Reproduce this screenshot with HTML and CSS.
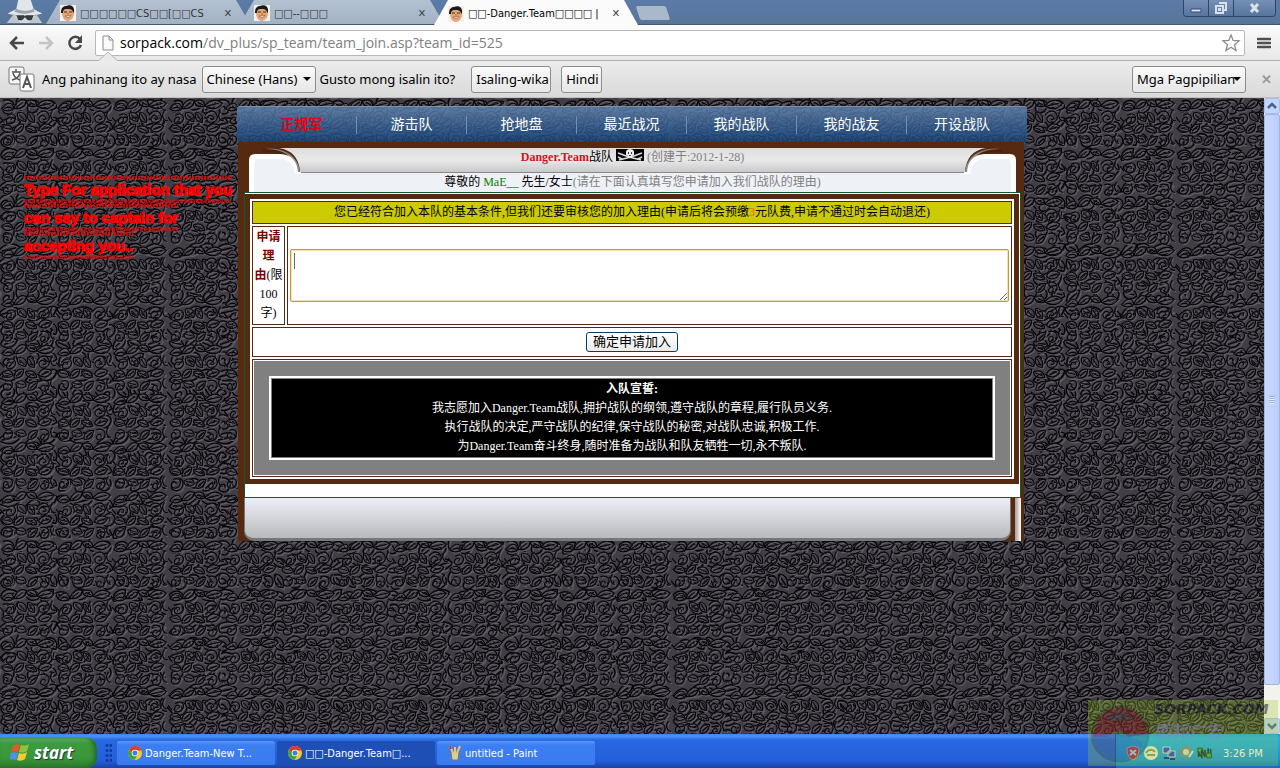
FILE: index.html
```html
<!DOCTYPE html>
<html lang="zh-CN">
<head>
    <meta charset="UTF-8">
    <meta name="viewport" content="width=device-width, initial-scale=1.0">
    <title>申请-Danger.Team</title>
    <link rel="stylesheet" href="styles.css">
</head>
<body>

<!-- Shared shapes -->
<svg class="defs" aria-hidden="true">
    <defs>
        <symbol id="face" viewBox="0 0 16 16">
            <rect width="16" height="16" fill="#f3efe9"/>
            <path d="M2 7c0-3 3-6 7-5 4 0 5 3 5 6 0 4-2 7-6 8-4 0-6-4-6-9z" fill="#e2a679"/>
            <path d="M1 8C1 3 3 1 6 1c4-2 9 0 8 6l-1 1c0-3-2-4-5-4C5 4 3 4 3 8z" fill="#1d1a1a"/>
            <path d="M4 7h3M9 7h3" stroke="#4a2a1c" stroke-width="1"/>
            <path d="M5 11c2 2 5 2 6-1-2 1-4 1-6 1z" fill="#fff" stroke="#8f3c2b" stroke-width=".6"/>
            <path d="M8 8v2" stroke="#b9714a" stroke-width="1.2"/>
        </symbol>
        <symbol id="chrome" viewBox="0 0 16 16">
            <circle cx="8" cy="8" r="7" fill="#f4c92b"/>
            <path d="M2 4.400A7 7 0 0 1 14.600 5.500H8L5 9z" fill="#dd3b2c"/>
            <path d="M2 4.400A7 7 0 0 0 7.500 15L10.500 10 6 9.500z" fill="#3ba24a"/>
            <circle cx="8" cy="8" r="3.300" fill="#fff"/>
            <circle cx="8" cy="8" r="2.500" fill="#3f7fd6"/>
        </symbol>
        <symbol id="ear" viewBox="0 0 52 44">
            <path d="M0 0H30C43 2 50 10 51 24H0z" fill="#552a10"/>
            <path d="M16 1C32-1 50 6 51 25H45C44 12 34 4 16 1z" fill="#8d8a87"/>
            <path d="M14 3C32 1 45 9 47 25" fill="none" stroke="#4a230c" stroke-width="3"/>
            <path d="M0 44V12Q0 6 6 6H32C44 7 48 14 49 24H52V44z" fill="#fff"/>
            <path d="M5 44V16Q5 11 10 11H32C41 12 45 17 46 26H52V44z" fill="#eef2f7"/>
        </symbol>
    </defs>
</svg>

<header class="browser">
    <div class="tab-strip">
        <svg class="spy" viewBox="0 0 44 25">
            <path d="M5 14C12 10 14 10 14 9L16 0H29L32 9C34 11 38 12 41 14 32 17 14 17 5 14z" fill="#e3e6e9"/>
            <path d="M14 9C20 12 27 12 32 9L33 12C26 15 18 15 12 12z" fill="#9aa2aa"/>
            <path d="M11 16H34L33 24H12z" fill="#d6dade"/>
            <path d="M14 16h8l1 1 1-1h8l-2 5h-4l-3-3-3 3h-4z" fill="#333b43"/>
            <path d="M4 24L11 15 18 24zM27 24L35 15 41 24z" fill="#bfc5cb"/>
        </svg>
        <a class="tab" href="#"><svg class="icon16"><use href="#face"/></svg><span class="tab-title">□□□□□□CS□□[□□CS</span><span class="x">✕</span></a>
        <a class="tab" href="#"><svg class="icon16"><use href="#face"/></svg><span class="tab-title">□□--□□□</span><span class="x">✕</span></a>
        <a class="tab active" href="#"><svg class="icon16"><use href="#face"/></svg><span class="tab-title">□□-Danger.Team□□□□ |</span><span class="x">✕</span></a>
        <button class="new-tab" aria-label="New tab"></button>
        <div class="window-buttons">
            <button aria-label="Minimize"><svg viewBox="0 0 24 16"><path d="M7 9h10v3H7z" fill="#d8e2ee" stroke="#334a6a"/></svg></button>
            <button aria-label="Restore"><svg viewBox="0 0 24 16"><path d="M10 3h7v7h-2M7 6h7v7H7zM10 9h1v1h-1z" fill="none" stroke="#d8e2ee" stroke-width="2"/></svg></button>
            <button class="wide" aria-label="Close"><svg viewBox="0 0 24 16"><path d="M8 4l7 8M15 4l-7 8" stroke="#d8e2ee" stroke-width="3"/></svg></button>
        </div>
    </div>

    <div class="toolbar">
        <button class="tool" aria-label="Back"><svg viewBox="0 0 18 18"><path d="M16 9H3M9 3L3 9l6 6" fill="none" stroke="#484848" stroke-width="2.500"/></svg></button>
        <button class="tool" aria-label="Forward"><svg viewBox="0 0 18 18"><path d="M2 9h13M9 3l6 6-6 6" fill="none" stroke="#c4c4c4" stroke-width="2.500"/></svg></button>
        <button class="tool" aria-label="Reload"><svg viewBox="0 0 18 18"><path d="M14 5A6 6 0 1 0 15 11" fill="none" stroke="#484848" stroke-width="2.500"/><path d="M16 1v8H9z" fill="#484848"/></svg></button>
        <div class="address">
            <svg class="page-icon" viewBox="0 0 12 16"><path d="M1 1h6l4 4v10H1zM7 1v4h4" fill="#fafafa" stroke="#8c8c8c"/></svg>
            <a class="url" href="#"><b>sorpack.com</b>/dv_plus/sp_team/team_join.asp?team_id=525</a>
            <svg class="star" viewBox="0 0 20 20"><path d="M10 2l2.200 5.500 5.800.4-4.500 3.800 1.500 5.800-5-3.200-5 3.200 1.500-5.800L2 7.900l5.800-.4z" fill="#fff" stroke="#8b8b8b" stroke-width="1.300"/></svg>
        </div>
        <button class="menu" aria-label="Menu"><svg viewBox="0 0 14 14"><path d="M1 3h12M1 7h12M1 11h12" stroke="#505050" stroke-width="2.600" stroke-linecap="round"/></svg></button>
    </div>

    <div class="infobar">
        <svg class="notch" viewBox="0 0 20 10"><path d="M0 10L10 1l10 9" fill="#e9e9e9" stroke="#b5b5b5"/></svg>
        <svg class="translate" viewBox="0 0 28 27">
            <rect x="1" y="1" width="15" height="17" rx="2" fill="#f6f6f6" stroke="#777"/>
            <path d="M4 6h9M8 3v3M5 7c1 4 4 6 7 7M12 7c-1 4-4 6-8 7" fill="none" stroke="#555" stroke-width="1.400"/>
            <rect x="12" y="8" width="14" height="17" rx="2" fill="#fff" stroke="#777"/>
            <path d="M15 22l4-11 4 11M16 18h6" fill="none" stroke="#555" stroke-width="2"/>
        </svg>
        <label for="lang">Ang pahinang ito ay nasa</label>
        <select id="lang" class="bar-button lang"><option>Chinese (Hans)</option></select>
        <span>Gusto mong isalin ito?</span>
        <button class="bar-button first">Isaling-wika</button>
        <button class="bar-button second">Hindi</button>
        <select class="bar-button options" aria-label="Mga Pagpipilian"><option>Mga Pagpipilian</option></select>
        <button class="bar-close" aria-label="Close">✕</button>
    </div>
</header>

<div class="viewport">
    <div class="page">
        <aside class="note"><span>Type For application that you<br>can say to captain for<br>accepting you..</span></aside>

        <main class="team">
            <nav class="menu-bar">
                <a class="current" href="#">正规军</a>
                <a href="#">游击队</a>
                <a href="#">抢地盘</a>
                <a href="#">最近战况</a>
                <a href="#">我的战队</a>
                <a href="#">我的战友</a>
                <a href="#">开设战队</a>
            </nav>
            <div class="frame">
                <div class="heading">
                    <svg class="ear"><use href="#ear"/></svg>
                    <div class="heading-text">
                        <p class="team-name"><b>Danger.Team</b>战队
                            <svg class="pirate" viewBox="0 0 28 12">
                                <rect width="28" height="12" fill="#050505"/>
                                <path d="M2 4l11 4 12 3M26 4L15 8 3 11M2 8l4 2M26 8l-4 2" fill="none" stroke="#ddd" stroke-width="1.400"/>
                                <path d="M10 3c0-4 8-4 8 0v3l-2 1v2h-4V7l-2-1z" fill="#eee"/>
                                <path d="M12 4h1M15 4h1M14 6v1" stroke="#000" stroke-width="1.400"/>
                            </svg>
                            <span>(创建于:2012-1-28)</span></p>
                        <p class="greeting">尊敬的 <em>MaE__</em> 先生/女士<span>(请在下面认真填写您申请加入我们战队的理由)</span></p>
                    </div>
                    <svg class="ear flip"><use href="#ear"/></svg>
                </div>

                <form class="sheet">
                    <table class="join">
                        <tr><td class="notice" colspan="2">您已经符合加入本队的基本条件,但我们还要审核您的加入理由(申请后将会预缴<span>3</span>元队费,申请不通过时会自动退还)</td></tr>
                        <tr>
                            <th class="reason"><label for="reason"><b>申请<br>理<br>由</b>(限<br>100<br>字)</label></th>
                            <td class="field"><textarea id="reason"></textarea></td>
                        </tr>
                        <tr><td class="action" colspan="2"><button type="button" class="submit">确定申请加入</button></td></tr>
                        <tr>
                            <td class="pledge" colspan="2">
                                <div class="pledge-area">
                                    <div class="oath">
                                        <b>入队宣誓:</b><br>
                                        我志愿加入Danger.Team战队,拥护战队的纲领,遵守战队的章程,履行队员义务.<br>
                                        执行战队的决定,严守战队的纪律,保守战队的秘密,对战队忠诚,积极工作.<br>
                                        为Danger.Team奋斗终身,随时准备为战队和队友牺牲一切,永不叛队.
                                    </div>
                                </div>
                            </td>
                        </tr>
                    </table>
                </form>
                <div class="base"><div class="base-plate"></div><div class="base-edge"></div></div>
            </div>
        </main>
    </div>

    <div class="scrollbar">
        <button aria-label="Scroll up"><svg viewBox="0 0 14 14"><path d="M3 9l4-4 4 4" fill="none" stroke="#4d6185" stroke-width="2.500"/></svg></button>
        <div class="thumb"></div>
        <button aria-label="Scroll down"><svg viewBox="0 0 14 14"><path d="M3 5l4 4 4-4" fill="none" stroke="#4d6185" stroke-width="2.500"/></svg></button>
    </div>
</div>

<footer class="taskbar">
    <button class="start">
        <svg viewBox="0 0 20 20">
            <path d="M3 4c2-2 4-2 7-1L8 10C5 9 3 9 1 10z" fill="#e8562c"/>
            <path d="M11 3c3 1 5 1 8-1l-2 7c-3 2-5 2-8 1z" fill="#8cc63e"/>
            <path d="M1 11c2-1 4-1 7 0l-2 7c-3-1-5-1-7 0z" fill="#4f8ff0"/>
            <path d="M9 11c3 1 5 1 8-1l-2 7c-3 2-5 2-8 1z" fill="#fbc92d"/>
        </svg>
        <span>start</span>
    </button>
    <div class="grip"></div>
    <button class="task"><svg class="icon16"><use href="#chrome"/></svg>Danger.Team-New T...</button>
    <button class="task pressed"><svg class="icon16"><use href="#chrome"/></svg>□□-Danger.Team□...</button>
    <button class="task">
        <svg class="icon16" viewBox="0 0 16 16"><path d="M4 7h8l-1 8H5z" fill="#d8cfa0" stroke="#80764d"/><path d="M6 8L3 1M8 8V2M10 8l3-7" stroke="#f0c36c" stroke-width="2"/><path d="M3 1l1 3" stroke="#c33" stroke-width="2"/></svg>
        untitled - Paint
    </button>
    <div class="tray">
        <svg viewBox="0 0 16 16"><path d="M8 1l6 2c0 6-1 9-6 12C3 12 2 9 2 3z" fill="#d8262c" stroke="#f0b0a8"/><path d="M5 5l6 5M11 5l-6 5" stroke="#fff" stroke-width="2"/></svg>
        <svg viewBox="0 0 16 16"><circle cx="8" cy="8" r="7" fill="#eceadb"/><path d="M3 8c2-4 7-4 9-1M4 10h8" fill="none" stroke="#8a8871" stroke-width="2"/></svg>
        <svg viewBox="0 0 16 16"><path d="M2 2h7v6H2zM7 6h7v6H7z" fill="#2336c8" stroke="#cfd8f5"/><path d="M3 13h5M9 14h5" stroke="#111a70" stroke-width="2"/></svg>
        <svg viewBox="0 0 16 16"><circle cx="7" cy="7" r="6" fill="#7c8288"/><circle cx="7" cy="7" r="3" fill="#d6d9dc"/><path d="M10 12l4-6" stroke="#c9ecf5" stroke-width="2"/></svg>
        <svg viewBox="0 0 20 16"><path d="M1 2h6v5H1zM12 8h6v6h-6z" fill="#35a04d" stroke="#122"/><path d="M2 13V8l4 5V4l4 9V4M14 2v6M17 3v5" fill="none" stroke="#10251c" stroke-width="2"/></svg>
        <time>3:26 PM</time>
    </div>
</footer>

<svg class="watermark" viewBox="0 0 190 66" aria-hidden="true">
    <rect width="190" height="66" fill="#9dcc28" opacity=".5"/>
    <ellipse cx="32" cy="34" rx="28" ry="27" fill="#3a3544" opacity=".35" stroke="#222" stroke-width="3"/>
    <path d="M8 24C18 4 46 2 56 22l4 12-20 3-9-8-12 8H5z" fill="#8c2028" opacity=".75"/>
    <path d="M18 20c8-10 22-10 30 0l-8-2-8 4-6-3z" fill="#47474c" opacity=".8"/>
    <path d="M5 38c12-6 30-6 50 4-6 22-38 26-50-4z" fill="#3763a6" opacity=".5"/>
    <text x="66" y="14" class="mark-name">SORPACK.COM</text>
    <text x="68" y="38" class="mark-cn">索邦广告</text>
</svg>

</body>
</html>
```
FILE: styles.css
```css
* {
    box-sizing: border-box;
}

body {
    margin: 0;
    height: 100vh;
    display: flex;
    flex-direction: column;
    overflow: hidden;
    font-family: "Noto Sans", "Open Sans", "Noto Sans CJK SC", sans-serif;
    font-size: 13px;
    color: #000;
}

button,
select,
textarea {
    font-family: inherit;
    font-size: inherit;
    margin: 0;
}

a {
    color: inherit;
    text-decoration: none;
}

p {
    margin: 0;
}

.defs {
    position: absolute;
    width: 0;
    height: 0;
}

.icon16 {
    width: 16px;
    height: 16px;
    flex: none;
}

/* Tabs */
.tab-strip {
    display: flex;
    height: 25px;
    padding-left: 2px;
    background: linear-gradient(#5b7ca8, #587499);
    border-bottom: 1px solid #3f5674;
}

.spy {
    width: 44px;
    height: 24px;
    flex: none;
}

.tab {
    display: flex;
    align-items: center;
    gap: 4px;
    width: 204px;
    height: 24px;
    margin-right: -10px;
    padding: 2px 18px 0 14px;
    background: linear-gradient(#b3c1d1, #a2b2c5);
    clip-path: polygon(14px 0, 190px 0, 204px 100%, 0 100%);
    font-family: "DejaVu Sans Condensed", "DejaVu Sans", sans-serif;
    font-size: 11px;
    color: #333;
}

.tab.active {
    z-index: 1;
    height: 25px;
    background: #fbfbfb;
    color: #000;
}

.tab-title {
    flex: 1;
    min-width: 0;
    overflow: hidden;
    white-space: nowrap;
}

.x {
    font-size: 11px;
    font-weight: bold;
    color: #444;
}

.new-tab {
    width: 30px;
    height: 14px;
    margin: 6px 0 0 10px;
    padding: 0;
    border: 0;
    border-radius: 2px;
    background: #a9b9cb;
    transform: skewX(18deg);
}

.window-buttons {
    display: flex;
    height: 17px;
    margin-left: auto;
    margin-right: 4px;
    border: 1px solid #2e4468;
    border-top: 0;
    border-radius: 0 0 4px 4px;
    overflow: hidden;
}

.window-buttons button {
    width: 25px;
    padding: 0;
    border: 0;
    border-right: 1px solid #2e4468;
    background: linear-gradient(#7690b5, #56759d);
}

.window-buttons .wide {
    width: 41px;
    border-right: 0;
}

.window-buttons svg {
    display: block;
    width: 24px;
    height: 16px;
    margin: auto;
}

/* Address row */
.toolbar {
    display: flex;
    align-items: center;
    height: 36px;
    padding: 0 8px;
    background: linear-gradient(#fbfbfb, #e8e8e8);
    border-bottom: 1px solid #b0b0b0;
}

.tool {
    width: 29px;
    height: 24px;
    padding: 0;
    border: 0;
    background: none;
    text-align: left;
}

.tool svg {
    display: block;
    width: 18px;
    height: 18px;
}

.address {
    flex: 1;
    display: flex;
    align-items: center;
    gap: 6px;
    height: 26px;
    padding: 0 3px 0 6px;
    background: #fff;
    border: 1px solid #b8b8b8;
    border-radius: 2px;
}

.page-icon {
    width: 12px;
    height: 16px;
}

.url {
    flex: 1;
    color: #808080;
    font-family: "Open Sans", "Noto Sans", sans-serif;
    font-size: 14px;
}

.url b {
    font-weight: normal;
    color: #000;
}

.star {
    width: 20px;
    height: 20px;
}

.menu {
    width: 27px;
    height: 24px;
    padding: 0 0 0 12px;
    border: 0;
    background: none;
}

.menu svg {
    display: block;
    width: 14px;
    height: 14px;
}

/* Translate bar */
.infobar {
    position: relative;
    display: flex;
    align-items: center;
    height: 37px;
    padding: 0 7px 0 8px;
    background: linear-gradient(#ececec, #d9d9d9);
    border-bottom: 1px solid #c0c0c0;
    white-space: nowrap;
}

.notch {
    position: absolute;
    left: 98px;
    top: -10px;
    width: 20px;
    height: 10px;
}

.translate {
    width: 28px;
    height: 27px;
    margin-right: 6px;
}

.bar-button {
    height: 27px;
    padding: 0 4px;
    border: 1px solid #8c8c8c;
    border-radius: 3px;
    background: linear-gradient(#fafafa, #e6e6e6);
    color: #000;
}

select.bar-button {
    appearance: none;
    padding: 0 10px 0 4px;
    background: url("data:image/svg+xml,%3Csvg xmlns='http://www.w3.org/2000/svg' width='8' height='4'%3E%3Cpath d='M0 0h8L4 4z'/%3E%3C/svg%3E") right 4px center no-repeat, linear-gradient(#fafafa, #e6e6e6);
}

.lang {
    width: 114px;
    margin: 0 4px 0 5px;
}

.first {
    width: 80px;
    margin-left: 16px;
}

.second {
    width: 41px;
    margin-left: 10px;
}

.options {
    width: 114px;
    margin-left: auto;
}

.bar-close {
    width: 27px;
    padding: 0 0 0 13px;
    border: 0;
    background: none;
    font-weight: bold;
    color: #999;
}

/* Page area */
.viewport {
    flex: 1;
    min-height: 0;
    display: flex;
}

/* Two copies of one leaf tile at different sizes, so the repeat is hard to see */
.page {
    --leaves: url("data:image/svg+xml,%3Csvg xmlns='http://www.w3.org/2000/svg' viewBox='0 0 64 56' width='64' height='56'%3E%3Cg fill='none'%3E%3Cpath id='a' d='M2 12c6-8 12-8 14 0-6 4-10 4-14 0zM5 12c4-2 6-2 9 0M16 12c2-8 8-12 14-9-1 7-6 10-14 9M18 11l8-6M30 4c6-4 12-1 12 5-5 2-10 1-12-5M34 5l6 3M42 9c6-8 14-8 20-3-5 7-12 8-20 3M45 9l13-3M8 20c8-5 12 2 8 7s-11 2-8-3 7 0 4 1M20 17c8-2 12 4 9 10-7-1-10-4-9-10M22 19l6 6M32 16c-2 7 1 12 7 12 2-7-1-11-7-12M33 18l5 8M42 20c5-7 12-6 14 0s-6 11-10 7 1-9 5-6-1 4-2 3M2 34c6-5 11-3 13 3-5 4-11 3-13-3M4 34l9 2M16 40c0-8 5-11 11-10 0 7-4 11-11 10M18 38l7-6M29 33c7-3 12 0 13 6-7 2-12 0-13-6M31 34l9 4M44 36c2-7 9-8 15-4-3 7-10 9-15 4M47 36l9-3M6 44c7-3 10 2 7 7s-10 3-9-2 6-2 5 0M18 46c5-5 11-3 12 3-5 4-11 3-12-3M20 46l8 2M32 54c-1-7 4-11 11-10-1 7-5 11-11 10M34 52l7-6M46 43c8-2 12 3 9 9s-11 2-8-2 6 0 4 1M60 14c-4 6-2 12 4 12M0 22l5 6M60 40c-4 5-2 11 3 12' stroke='%235f5b64' stroke-width='1.2' transform='translate(1.500 1.500)'/%3E%3Cuse href='%23a' transform='translate(-1.500 -1.500)'/%3E%3Cpath d='M2 12c6-8 12-8 14 0-6 4-10 4-14 0zM5 12c4-2 6-2 9 0M16 12c2-8 8-12 14-9-1 7-6 10-14 9M18 11l8-6M30 4c6-4 12-1 12 5-5 2-10 1-12-5M34 5l6 3M42 9c6-8 14-8 20-3-5 7-12 8-20 3M45 9l13-3M8 20c8-5 12 2 8 7s-11 2-8-3 7 0 4 1M20 17c8-2 12 4 9 10-7-1-10-4-9-10M22 19l6 6M32 16c-2 7 1 12 7 12 2-7-1-11-7-12M33 18l5 8M42 20c5-7 12-6 14 0s-6 11-10 7 1-9 5-6-1 4-2 3M2 34c6-5 11-3 13 3-5 4-11 3-13-3M4 34l9 2M16 40c0-8 5-11 11-10 0 7-4 11-11 10M18 38l7-6M29 33c7-3 12 0 13 6-7 2-12 0-13-6M31 34l9 4M44 36c2-7 9-8 15-4-3 7-10 9-15 4M47 36l9-3M6 44c7-3 10 2 7 7s-10 3-9-2 6-2 5 0M18 46c5-5 11-3 12 3-5 4-11 3-12-3M20 46l8 2M32 54c-1-7 4-11 11-10-1 7-5 11-11 10M34 52l7-6M46 43c8-2 12 3 9 9s-11 2-8-2 6 0 4 1M60 14c-4 6-2 12 4 12M0 22l5 6M60 40c-4 5-2 11 3 12' stroke='%23060508' stroke-width='1.4'/%3E%3C/g%3E%3C/svg%3E");
    flex: 1;
    display: grid;
    grid-template-columns: 1fr minmax(0, 790px) 1fr;
    align-items: start;
    padding-top: 8px;
    background: var(--leaves) 0 0 / 56px 49px, var(--leaves) 23px 17px / 72px 63px, #413e47;
}

.note {
    margin: 70px -24px 0 24px;
    font: bold 15px/28px "Liberation Sans", sans-serif;
    white-space: nowrap;
    color: #f00;
    -webkit-text-stroke: 1px #f00;
}

.note span {
    background: repeating-linear-gradient(90deg, rgba(255, 0, 0, .7) 0 2px, transparent 2px 3px) 0 0 / 100% 4px no-repeat,
        repeating-linear-gradient(90deg, rgba(255, 0, 0, .6) 0 3px, transparent 3px 4px) 0 100% / 100% 4px no-repeat;
    padding: 5px 0;
    -webkit-box-decoration-break: clone;
    box-decoration-break: clone;
}

.team {
    grid-column: 2;
    font-family: "Liberation Serif", "Noto Sans CJK SC", serif;
    font-size: 12px;
    line-height: 19px;
}

.menu-bar {
    display: grid;
    grid-template-columns: repeat(7, 110px);
    align-items: center;
    height: 36px;
    padding-left: 10px;
    background: linear-gradient(rgba(100, 135, 180, .8), rgba(20, 72, 130, .8));
    border-top: 1px solid #7890a8;
    border-radius: 3px 3px 0 0;
    font-size: 14px;
    color: #fff;
    text-align: center;
}

.menu-bar a {
    line-height: 18px;
    border-right: 1px solid #6d91b6;
}

.menu-bar a:last-child {
    border-right: 0;
}

.menu-bar .current {
    color: #e80010;
    font-weight: bold;
}

.frame {
    margin: 0 3px 0 1px;
    padding: 6px 3px 0 6px;
    background: #552a10;
}

.heading {
    display: flex;
    height: 44px;
    margin: 0 5px;
    background: linear-gradient(#dedede, #e9e9ea 12px, #c8c9ca 24px, #888 24px, #888 25px, #eef2f7 25px);
}

.heading-text {
    flex: 1;
    text-align: center;
}

.team-name {
    height: 25px;
    color: #000;
}

.team-name b {
    color: #d8101c;
}

.team-name span,
.greeting span {
    color: #808080;
}

.greeting em {
    font-style: normal;
    color: #008000;
}

.pirate {
    width: 28px;
    height: 12px;
}

.ear {
    width: 52px;
    height: 44px;
    flex: none;
}

.flip {
    transform: scaleX(-1);
}

.sheet {
    padding: 1px 1px 13px 0;
    border: 1px solid #0c5a32;
    background: #fff;
}

.join {
    width: 100%;
    border: 5px solid #552a10;
    border-spacing: 2px;
    text-align: center;
}

.join td,
.join th {
    padding: 0;
    border: 1px solid #552a10;
    font-weight: normal;
}

.join .notice {
    height: 23px;
    background: #cccb00;
}

.notice span {
    color: #f50;
}

.join .reason {
    width: 33px;
    padding: 1px;
}

.reason b {
    color: #800000;
}

.join .field {
    padding: 0 2px;
}

/* The first background layer is the text cursor */
.field textarea {
    display: block;
    width: 100%;
    height: 53px;
    padding: 2px;
    border: 1px solid #c8982c;
    border-radius: 2px;
    box-shadow: inset 0 0 0 1px #f2e2b8;
    outline: 0;
    background: linear-gradient(#666, #666) 3px 3px / 1px 16px no-repeat, #fff;
}

.join .action {
    height: 30px;
}

.submit {
    display: block;
    width: 92px;
    height: 20px;
    margin: 0 auto;
    padding: 0;
    border: 1px solid #003c74;
    border-radius: 3px;
    background: linear-gradient(#fff, #ecebe5);
    font-size: 13px;
    line-height: 18px;
}

.join .pledge {
    padding: 1px;
}

.pledge-area {
    padding: 15px;
    background: #808080;
}

.oath {
    padding: 2px;
    background: #000;
    border: 2px solid #fff;
    outline: 1px solid #808080;
    outline-offset: -3px;
    color: #fff;
}

.base {
    display: flex;
    height: 43px;
}

.base-plate {
    flex: 1;
    background: linear-gradient(#eceff8, #b9babc 40px);
    border: solid #77777b;
    border-width: 0 1px 3px;
    border-radius: 0 0 10px 10px;
}

.base-edge {
    width: 6px;
    margin-left: 4px;
    background: linear-gradient(90deg, #a99b92, #fff);
}

/* Scrollbar */
.scrollbar {
    display: flex;
    flex-direction: column;
    width: 16px;
    background: #f3f3ee;
}

.scrollbar button {
    height: 16px;
    padding: 0;
    border: 1px solid #a9bfee;
    border-radius: 2px;
    background: #c3d5fd;
}

.scrollbar svg {
    display: block;
    width: 14px;
    height: 14px;
}

.thumb {
    flex: 1;
    margin-bottom: 33px;
    border: 1px solid #9db5ea;
    border-radius: 2px;
    background: repeating-linear-gradient(#8fa9e4 0 1px, #eef4fe 1px 2px) center / 6px 8px no-repeat, linear-gradient(90deg, #c9d8fc, #bccdf8);
}

/* Taskbar */
.taskbar {
    display: flex;
    align-items: stretch;
    height: 34px;
    background: linear-gradient(#3a80f0, #4a93fa 2px, #2868e2 6px, #245edb 27px, #1941a5);
    font-family: "DejaVu Sans Condensed", "DejaVu Sans", sans-serif;
    font-size: 11px;
    color: #fff;
}

.start {
    display: flex;
    align-items: center;
    gap: 4px;
    width: 97px;
    margin-top: 4px;
    padding: 0 10px 2px;
    border: 0;
    border-radius: 0 10px 10px 0;
    background: linear-gradient(#6fbb6c, #3d9b3d 5px, #3a963a 20px, #2b7a2c);
    box-shadow: inset -3px 0 4px #256b2a;
    color: #fff;
    font: italic bold 17px "Open Sans", sans-serif;
    text-shadow: 1px 1px 1px #234;
}

.start svg {
    width: 20px;
    height: 20px;
}

.grip {
    width: 7px;
    margin: 9px 5px 4px 8px;
    background: radial-gradient(circle, #123a9c 1px, transparent 2px) 0 0 / 4px 5px;
}

.task {
    display: flex;
    align-items: center;
    gap: 2px;
    width: 158px;
    height: 24px;
    margin: 7px 2px 0 0;
    padding: 0 10px;
    border: 0;
    border-radius: 2px;
    background: linear-gradient(#5a97fb, #3c7ff3 4px, #3a7bee);
    color: #fff;
    font-size: 11px;
    white-space: nowrap;
}

.pressed {
    background: #1e4fb5;
}

.tray {
    display: flex;
    align-items: center;
    gap: 2px;
    width: 165px;
    margin-left: auto;
    padding: 4px 0 0 9px;
    background: linear-gradient(#169bef, #1ab0f4 4px, #1290e8 26px, #0f6dc4);
    border-left: 1px solid #0b3f9b;
}

.tray svg {
    width: 16px;
    height: 16px;
    flex: none;
}

.tray time {
    margin-left: 8px;
    white-space: nowrap;
}

/* Site logo floating over the corner of the screen */
.watermark {
    position: absolute;
    right: 2px;
    bottom: 2px;
    width: 190px;
    height: 66px;
    opacity: .6;
    pointer-events: none;
}

.mark-name {
    font: italic bold 14px "DejaVu Sans", sans-serif;
    fill: #23262b;
}

.mark-cn {
    font: bold 17px "Noto Sans CJK SC", sans-serif;
    fill: #8c9aa4;
}
```
